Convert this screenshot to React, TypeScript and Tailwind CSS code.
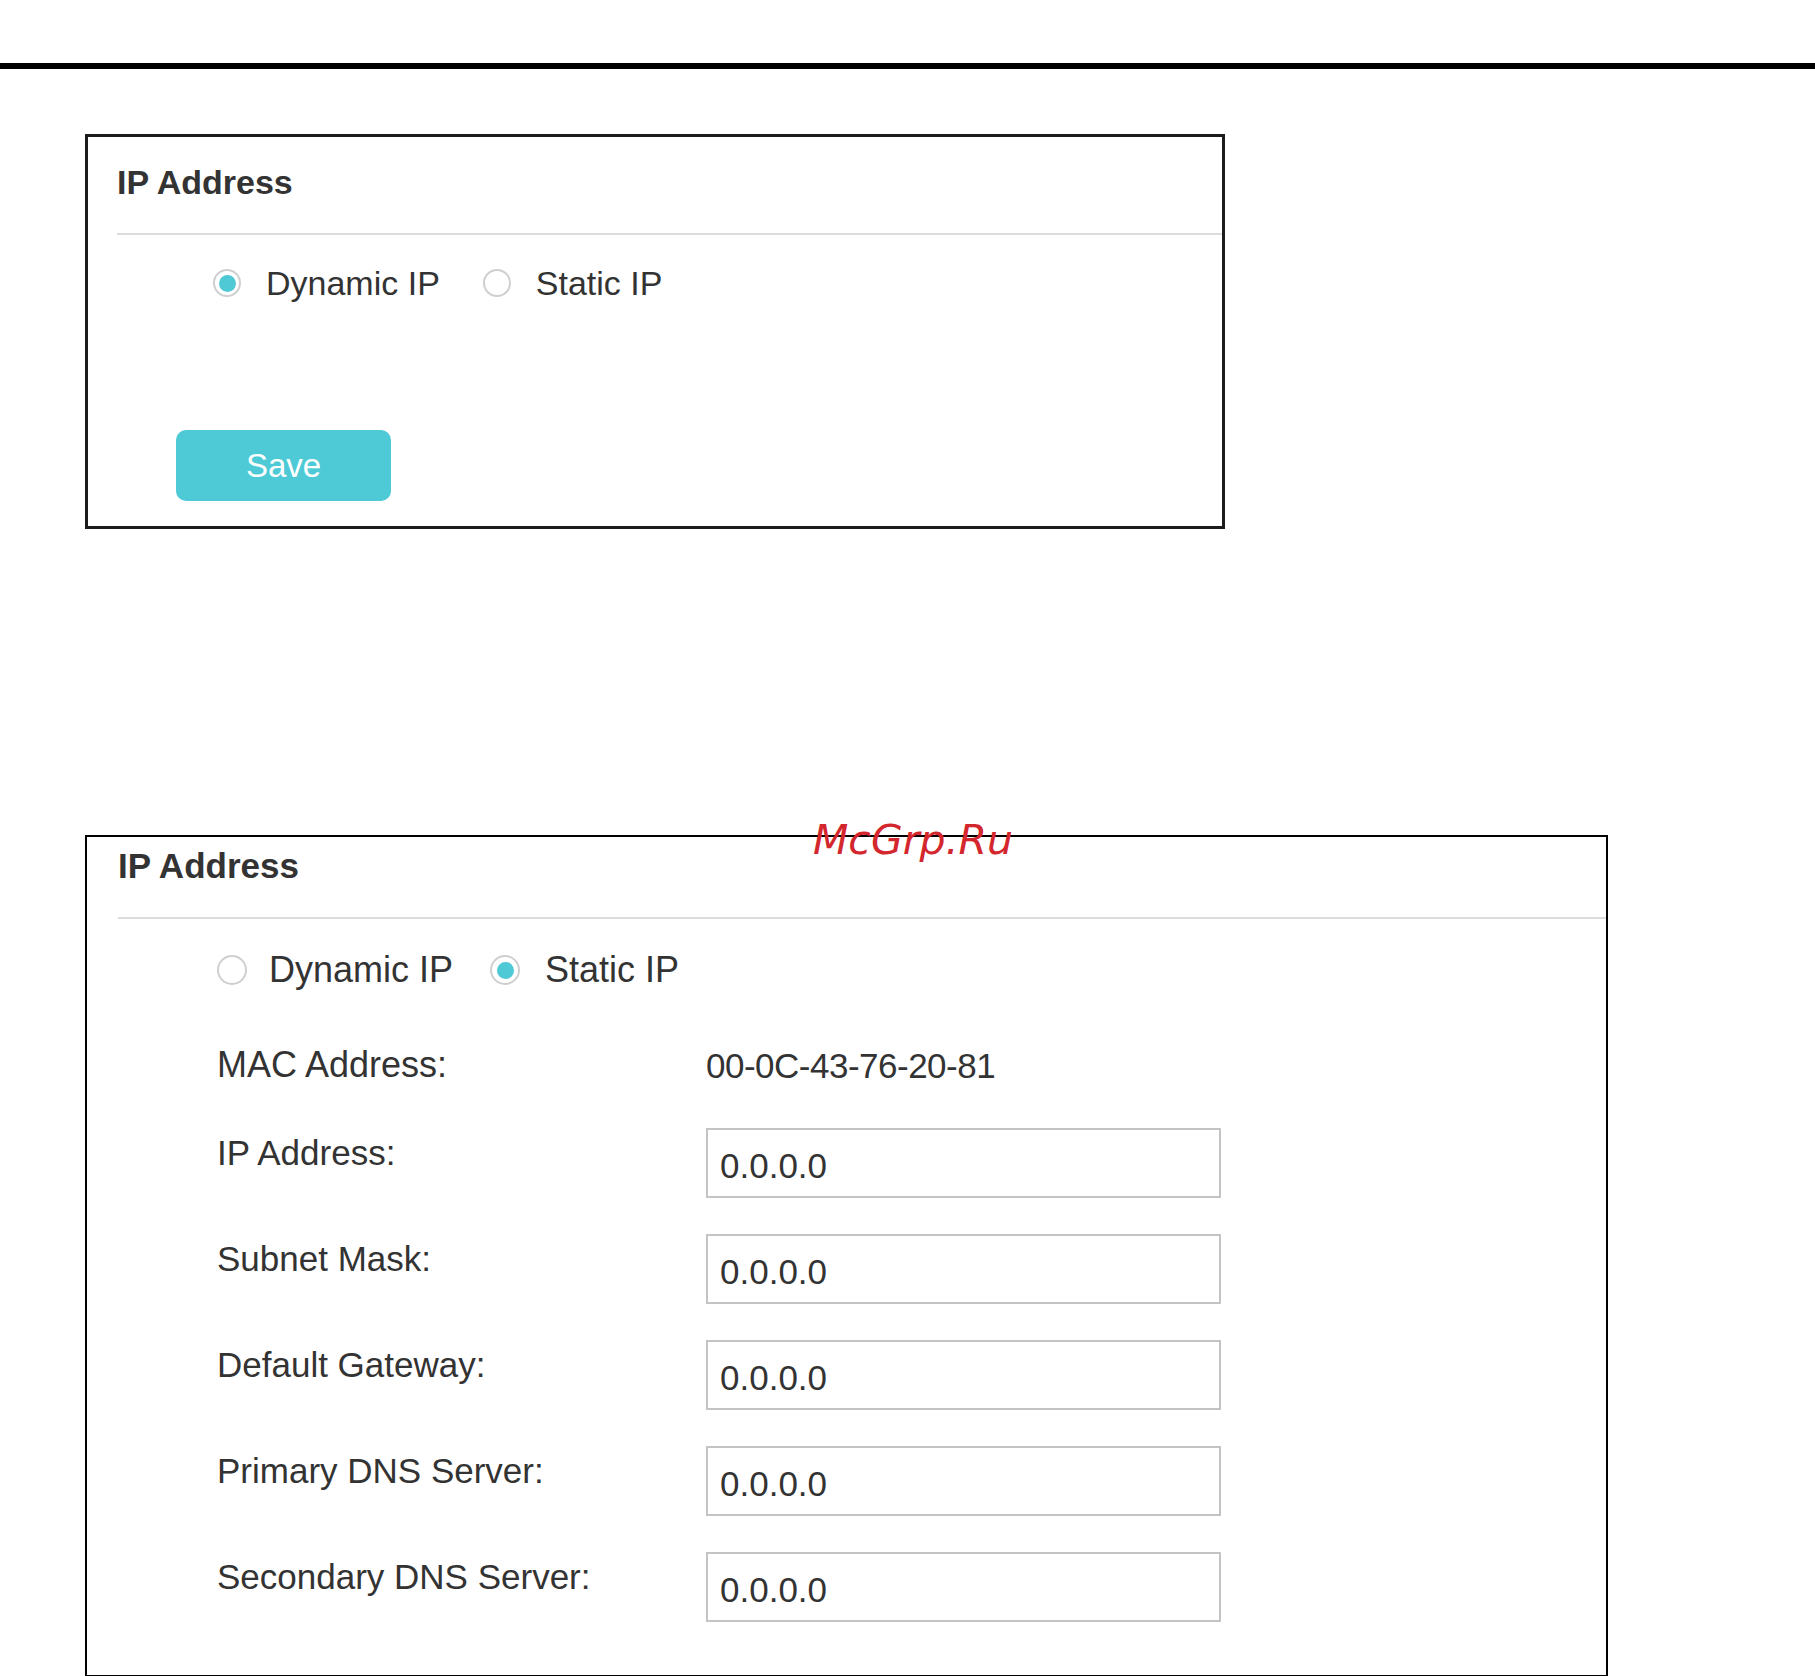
import React from 'react';

type RadioProps = { checked?: boolean; size: 'sm' | 'md' };

function Radio({ checked, size }: RadioProps) {
	const outer = size === 'sm' ? 'w-[28px] h-[28px]' : 'w-[30px] h-[30px]';
	return (
		<span className={`${outer} shrink-0 rounded-full border-2 border-[#cfcfcf] bg-white flex items-center justify-center`}>
			{checked && <span className="w-[17px] h-[17px] rounded-full bg-[#4ec9d5]" />}
		</span>
	);
}

const fields = ['IP Address:', 'Subnet Mask:', 'Default Gateway:', 'Primary DNS Server:', 'Secondary DNS Server:'];

export default function App() {
	return (
		<div className="min-h-[1676px] w-full bg-white font-['Liberation_Sans',Arial,sans-serif] text-[#333] pt-[63px]">
			{/* page rule */}
			<div className="h-[6px] bg-black" />

			{/* Dynamic IP panel */}
			<div className="ml-[85px] mt-[65px] w-[1140px] border-[3px] border-[#1c1c1c] pb-[25px]">
				<div className="pl-[29px] pt-[28px]">
					<h2 className="text-[34px] leading-none font-bold">IP Address</h2>
					<div className="mt-[34px] h-[2px] bg-[#dcdcdc]" />
					<div className="mt-[31px] pl-[96px] flex items-center h-[34px]">
						<Radio checked size="sm" />
						<span className="ml-[25px] text-[34px] leading-none">Dynamic IP</span>
						<span className="ml-[43px]"><Radio size="sm" /></span>
						<span className="ml-[25px] text-[34px] leading-none">Static IP</span>
					</div>
					<button className="mt-[130px] ml-[59px] w-[215px] h-[71px] rounded-[10px] bg-[#4ecad6] text-white text-[33px] leading-none flex items-center justify-center">
						Save
					</button>
				</div>
			</div>

			{/* Static IP panel */}
			<div className="relative ml-[85px] mt-[306px] w-[1523px] border-2 border-black pb-[53px]">
				<span className="absolute left-[726px] top-[-17px] font-['DejaVu_Sans',sans-serif] italic text-[41px] leading-none text-[#d3262d]">
					McGrp.Ru
				</span>
				<div className="pl-[31px] pt-[11px]">
					<h2 className="text-[35px] leading-none font-bold">IP Address</h2>
					<div className="mt-[34px] h-[2px] bg-[#dcdcdc]" />
					<div className="pl-[99px]">
						<div className="mt-[33px] flex items-center h-[36px]">
							<Radio size="md" />
							<span className="ml-[22px] text-[36px] leading-none">Dynamic IP</span>
							<span className="ml-[37px]"><Radio checked size="md" /></span>
							<span className="ml-[25px] text-[36px] leading-none">Static IP</span>
						</div>

						<div className="mt-[59px] flex items-start">
							<span className="w-[489px] text-[36px] leading-none">MAC Address:</span>
							<span className="text-[35px] leading-none tracking-[-0.5px] pt-[1px]">00-0C-43-76-20-81</span>
						</div>

						<div className="mt-[45px] flex flex-col gap-[36px]">
							{fields.map((label) => (
								<div key={label} className="flex items-start">
									<span className="w-[489px] mt-[7px] text-[35px] leading-none">{label}</span>
									<div className="w-[515px] h-[70px] border-2 border-[#c4c4c4] px-[12px] pt-[6px] flex items-center text-[35px]">
										0.0.0.0
									</div>
								</div>
							))}
						</div>
					</div>
				</div>
			</div>
		</div>
	);
}
